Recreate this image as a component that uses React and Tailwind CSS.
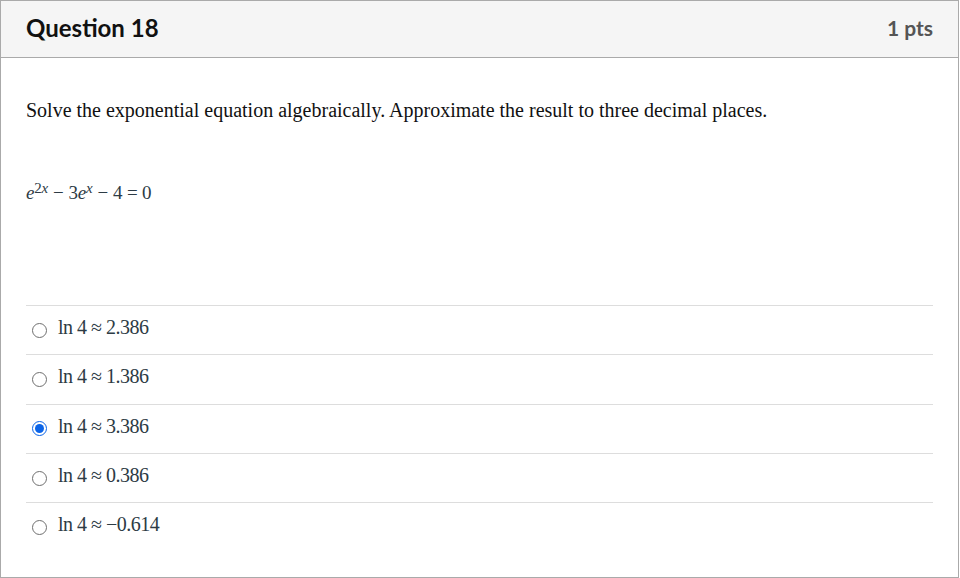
import React, { useState } from 'react';

const answers = [
  { id: 'a', value: '2.386' },
  { id: 'b', value: '1.386' },
  { id: 'c', value: '3.386' },
  { id: 'd', value: '0.386' },
  { id: 'e', value: '\u22120.614' },
];

function Radio({ checked }) {
  return checked ? (
    <span className="w-[15px] h-[15px] rounded-full border-[1.5px] border-[#0b64e8] flex items-center justify-center shrink-0">
      <span className="w-[9px] h-[9px] rounded-full bg-[#0b64e8]" />
    </span>
  ) : (
    <span className="w-[15px] h-[15px] rounded-full border-[1.5px] border-[#6f6f6f] shrink-0" />
  );
}

export default function App() {
  const [selected, setSelected] = useState('c');

  return (
    <div className="w-[960px] h-[578px] bg-white">
      <div className="w-[959px] h-[578px] border border-[#aaaaaa] flex flex-col">
        {/* Header */}
        <div className="h-[57px] bg-[#f5f5f5] border-b border-[#aaaaaa] flex items-center justify-between pl-[25px] pr-[25px] pb-[3px] font-['Lato',sans-serif]">
          <h2 className="text-[24px] font-bold text-[#111]">Question 18</h2>
          <span className="text-[21px] font-bold text-[#555]">1 pts</span>
        </div>

        {/* Body */}
        <div className="px-[25px] font-['Liberation_Serif',serif] text-[#2d3b45]">
          <p className="mt-[40px] text-[20px] leading-[24px] text-[#111]">
            Solve the exponential equation algebraically. Approximate the result to three decimal places.
          </p>

          <div className="mt-[60px] text-[19px] leading-[22px] text-[#2d3b45] h-[22px] tracking-[-0.2px]">
            <i>e</i>
            <sup className="text-[15px] relative top-[-6px]">2<i>x</i></sup>
            <span className="mx-[5px]">{'\u2212'}</span>3<i>e</i>
            <sup className="text-[15px] relative top-[-6px]"><i>x</i></sup>
            <span className="mx-[5px]">{'\u2212'}</span>4 = 0
          </div>

          <div className="mt-[101px]">
            {answers.map((a) => (
              <label
                key={a.id}
                onClick={() => setSelected(a.id)}
                className="h-[49.3px] border-t border-[#dddddd] flex items-center gap-[11px] pl-[6px] cursor-pointer"
              >
                <Radio checked={selected === a.id} />
                <span className="text-[20px] leading-[24px] tracking-[-0.5px] text-[#2d3b45] relative top-[-3px]">
                  ln 4 {'\u2248'} {a.value}
                </span>
              </label>
            ))}
          </div>
        </div>
      </div>
    </div>
  );
}
